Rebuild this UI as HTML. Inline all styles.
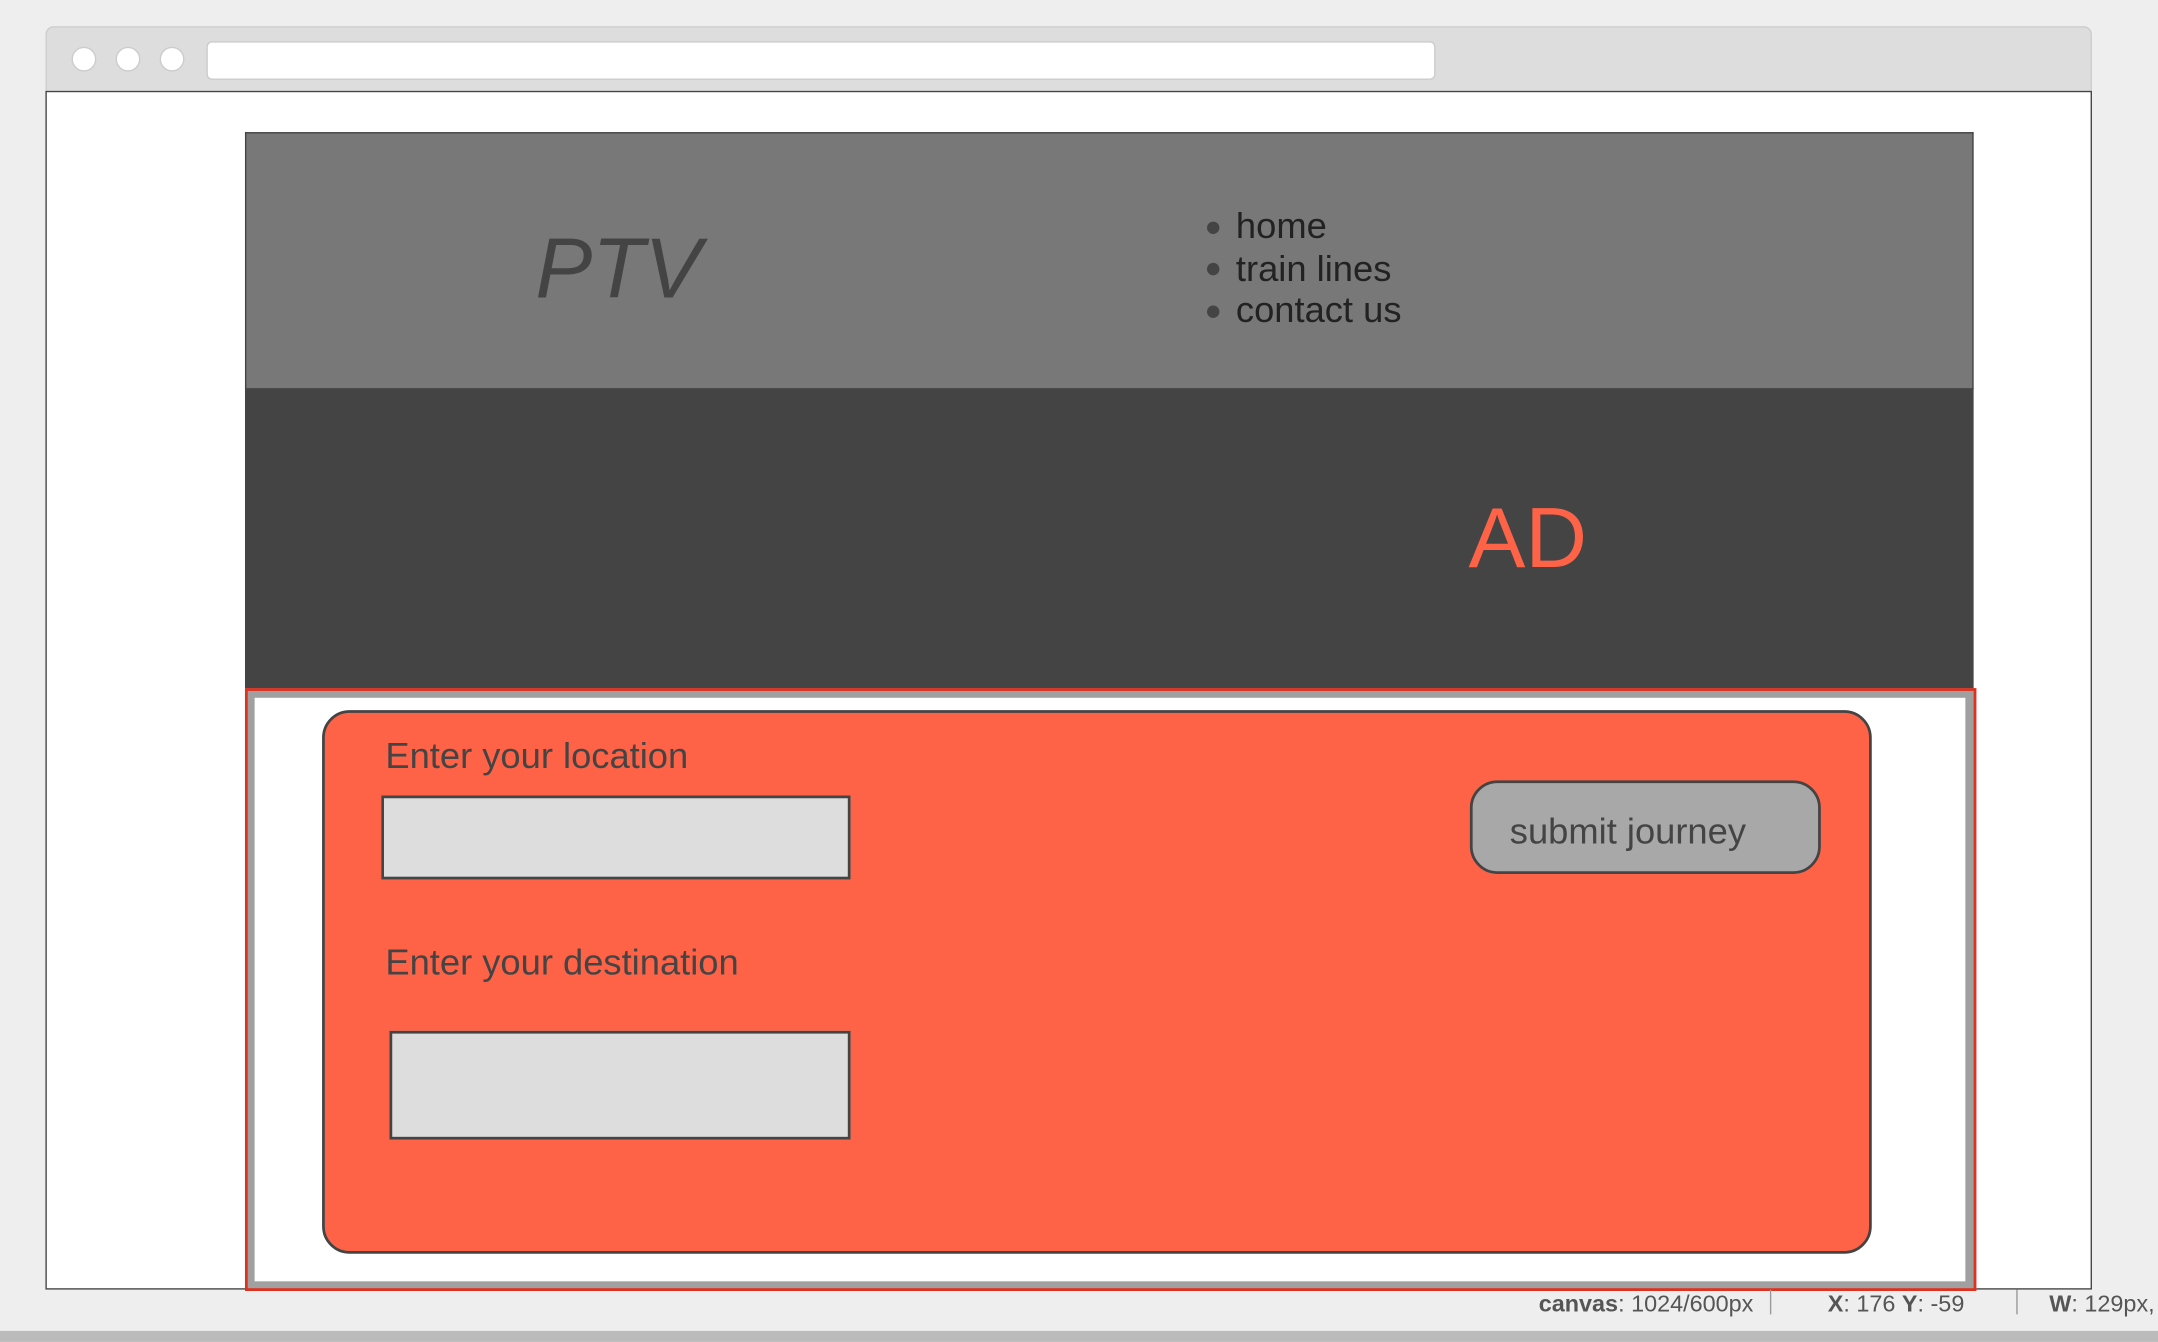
<!DOCTYPE html>
<html><head><meta charset="utf-8"><style>
html,body{margin:0;padding:0;width:2158px;height:1342px;overflow:hidden;background:#eee;font-family:"Liberation Sans",Arial,sans-serif}
#s{position:absolute;left:0;top:0;width:1568px;height:975px;transform:scale(1.3763);transform-origin:0 0}
.a{position:absolute;box-sizing:border-box}
.c{position:absolute;width:18px;height:18px;border-radius:50%;background:#fff;border:1px solid #ccc;top:34px;box-sizing:border-box}
.t{position:absolute;white-space:nowrap;line-height:1}
</style></head><body><div id="s">
<div class="a" style="left:33px;top:19px;width:1487px;height:48px;background:#ddd;border:1px solid #ccc;border-bottom:none;border-radius:6px 6px 0 0"></div>
<div class="c" style="left:52px"></div><div class="c" style="left:84px"></div><div class="c" style="left:116px"></div>
<div class="a" style="left:150px;top:30px;width:893px;height:28px;background:#fff;border:1px solid #ccc;border-radius:4px"></div>
<div class="a" style="left:33px;top:66px;width:1487px;height:871px;background:#fff;border:1px solid #444"></div>
<div class="a" style="left:178px;top:96px;width:1256px;height:187px;background:#787878;border:1px solid #444;border-bottom:none"></div>
<div class="t" style="left:389px;top:165px;font-size:62px;font-style:italic;color:#444">PTV</div>
<div class="a" style="left:877px;top:161px;width:9px;height:9px;border-radius:50%;background:#444"></div>
<div class="a" style="left:877px;top:191px;width:9px;height:9px;border-radius:50%;background:#444"></div>
<div class="a" style="left:877px;top:222px;width:9px;height:9px;border-radius:50%;background:#444"></div>
<div class="t" style="left:898px;top:151px;font-size:26.4px;color:#222">home</div>
<div class="t" style="left:898px;top:182px;font-size:26.4px;color:#222">train lines</div>
<div class="t" style="left:898px;top:212px;font-size:26.4px;color:#222">contact us</div>
<div class="a" style="left:178px;top:282px;width:1256px;height:219px;background:#444"></div>
<div class="t" style="left:1067px;top:361px;font-size:62px;color:#fe6347">AD</div>
<div class="a" style="left:178px;top:500px;width:1258px;height:438px;border:2px solid #e0301e;background:#a0a0a0"></div>
<div class="a" style="left:185px;top:507px;width:1243px;height:424px;background:#fff"></div>
<div class="a" style="left:234px;top:516px;width:1126px;height:395px;background:#fe6347;border:2px solid #444;border-radius:20px"></div>
<div class="t" style="left:280px;top:536px;font-size:26.4px;color:#444">Enter your location</div>
<div class="a" style="left:277px;top:578px;width:341px;height:61px;background:#ddd;border:2px solid #444"></div>
<div class="t" style="left:280px;top:686px;font-size:26.4px;color:#444">Enter your destination</div>
<div class="a" style="left:283px;top:749px;width:335px;height:79px;background:#ddd;border:2px solid #444"></div>
<div class="a" style="left:1068px;top:567px;width:255px;height:68px;background:#a8a8a8;border:2px solid #444;border-radius:20px"></div>
<div class="t" style="left:1097px;top:591px;font-size:26.4px;color:#444">submit journey</div>
<div class="t" style="left:1118px;top:939px;font-size:17px;color:#555"><b>canvas</b>: 1024/600px</div>
<div class="a" style="left:1286px;top:937px;width:1px;height:18px;background:#999"></div>
<div class="t" style="left:1328px;top:939px;font-size:17px;color:#555"><b>X</b>: 176 <b>Y</b>: -59</div>
<div class="a" style="left:1465px;top:937px;width:1px;height:18px;background:#999"></div>
<div class="t" style="left:1489px;top:939px;font-size:17px;color:#555"><b>W</b>: 129px,</div>
<div class="a" style="left:0;top:967px;width:1568px;height:8px;background:#bbb"></div>
</div></body></html>
